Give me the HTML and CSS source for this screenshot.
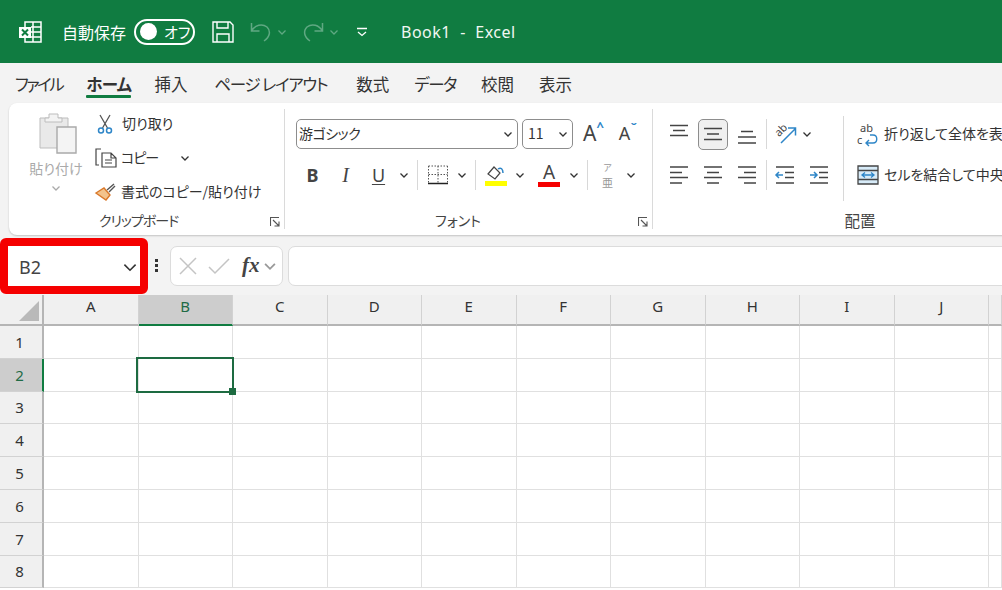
FILE: index.html
```html
<!DOCTYPE html>
<html lang="ja">
  <head>
    <meta charset="UTF-8" />
    <title>Book1 - Excel</title>
    <link rel="stylesheet" href="styles.css">
  </head>
  <body>
    <svg class="defs" aria-hidden="true">
      <symbol id="caret" viewBox="0 0 10 10"><path d="M1.5 3.5 5 7l3.5-3.5" fill="none" stroke="currentColor" stroke-width="1.3"/></symbol>
      <symbol id="launcher" viewBox="0 0 10 10"><path d="M.5 9V.5H9M3 3l5.5 5.5M4.5 9H9V4.500" fill="none" stroke="#555" stroke-width="1.100"/></symbol>
      <symbol id="al-top" viewBox="0 0 20 24"><path d="M1 3.500h18M4 8.500h12M1 13.500h18" stroke="#444" stroke-width="1.300"/></symbol>
      <symbol id="al-mid" viewBox="0 0 20 24"><path d="M1 6.500h18M4 12h12M1 17.500h18" stroke="#444" stroke-width="1.300"/></symbol>
      <symbol id="al-bot" viewBox="0 0 20 24"><path d="M4 9.500h12M1 15h18M1 21h18" stroke="#444" stroke-width="1.300"/></symbol>
      <symbol id="al-left" viewBox="0 0 20 20"><path d="M1 2h18M1 7.500h12M1 12.500h18M1 18h12" stroke="#444" stroke-width="1.300"/></symbol>
      <symbol id="al-center" viewBox="0 0 20 20"><path d="M1 2h18M4 7.500h12M1 12.500h18M4 18h12" stroke="#444" stroke-width="1.300"/></symbol>
      <symbol id="al-right" viewBox="0 0 20 20"><path d="M1 2h18M7 7.500h12M1 12.500h18M7 18h12" stroke="#444" stroke-width="1.300"/></symbol>
    </svg>

    <header class="titlebar">
      <svg class="xl-logo" width="23" height="22" viewBox="0 0 23 22">
        <path d="M6 1h16v20H6z" fill="none" stroke="#fff" stroke-width="1.500"/>
        <path d="M14 1v20M12 6h10M12 11h10M12 16h10" stroke="#fff" stroke-width="1.500"/>
        <rect x="0" y="6" width="12" height="11" fill="#fff"/>
        <path d="M3 8.500 9 14.500M9 8.500 3 14.500" stroke="#107c41" stroke-width="2"/>
      </svg>
      <span class="autosave">自動保存</span>
      <div class="toggle"><span class="knob"></span><span>オフ</span></div>
      <svg class="save" width="22" height="22" viewBox="0 0 22 22" fill="none" stroke="#fff" stroke-width="1.400">
        <path d="M1 1h17l3 3v17H1z"/>
        <path d="M5 1v6h11V1M5 21v-8h12v8"/>
      </svg>
      <svg class="undo" width="22" height="22" viewBox="0 0 22 22" fill="none" stroke="#5fa882" stroke-width="1.500">
        <path d="M1.500 2v8h8M1.500 10C5 4 12 2 17 6c4 4 3 10-3 14"/>
      </svg>
      <svg class="qat-caret" width="10" height="10"><use href="#caret"/></svg>
      <svg class="redo" width="22" height="22" viewBox="0 0 22 22" fill="none" stroke="#5fa882" stroke-width="1.500">
        <path d="M20.500 2v8h-8M20.500 10C17 4 10 2 5 6c-4 4-3 10 3 14"/>
      </svg>
      <svg class="qat-caret" width="10" height="10"><use href="#caret"/></svg>
      <svg class="qat-more" width="10" height="10" viewBox="0 0 10 10" fill="none" stroke="#fff" stroke-width="1.300">
        <path d="M0 1.500h10M1 5l4 3.500L9 5"/>
      </svg>
      <span class="doc-title">Book1&nbsp; - &nbsp;Excel</span>
    </header>

    <nav class="tabs">
      <span class="tab-file">ファイル</span>
      <span class="active">ホーム</span>
      <span class="tab-insert">挿入</span>
      <span class="tab-layout">ページ レイアウト</span>
      <span class="tab-formula">数式</span>
      <span class="tab-data">データ</span>
      <span>校閲</span>
      <span>表示</span>
    </nav>

    <section class="ribbon">
      <div class="group clipboard">
        <div class="group-body">
          <div class="paste">
            <svg width="38" height="41" viewBox="0 0 38 41">
              <path d="M1 5h28v30H1z" fill="#e9e9e9" stroke="#bdbdbd"/>
              <path d="M10 5V1h9v4h4v4H6V5z" fill="#f3f3f3" stroke="#bdbdbd"/>
              <path d="M18 14h19v26H18z" fill="#f4f4f4" stroke="#a9a9a9" stroke-width="1.400"/>
            </svg>
            <span>貼り付け</span>
            <svg class="caret-sm" width="10" height="10"><use href="#caret"/></svg>
          </div>
          <div class="clip-list">
            <div class="clip-item">
              <svg class="clip-icon" width="16" height="20" viewBox="0 0 16 20" fill="none">
                <path d="M3 1l7.500 13M13 1 5.500 14" stroke="#555" stroke-width="1.300"/>
                <circle cx="4" cy="16.500" r="2.500" stroke="#2e86c8" stroke-width="1.500"/>
                <circle cx="12" cy="16.500" r="2.500" stroke="#2e86c8" stroke-width="1.500"/>
              </svg>
              <span>切り取り</span>
            </div>
            <div class="clip-item">
              <svg class="clip-icon" width="22" height="20" viewBox="0 0 22 20" fill="none" stroke="#444" stroke-width="1.200">
                <path d="M6 1H1v16h3"/>
                <path d="M7 5h9l5 5v9H7zM16 5v5h5M10 12h7M10 15h7"/>
              </svg>
              <span class="copy-text">コピー</span>
              <svg class="copy-caret" width="10" height="10"><use href="#caret"/></svg>
            </div>
            <div class="clip-item">
              <svg class="clip-icon" width="22" height="20" viewBox="0 0 22 20" fill="none">
                <path d="M1 11 9 6l6 7-4 5z" fill="#f3c38c" stroke="#d9782a" stroke-width="1.400"/>
                <path d="M12 8l7-6M14 10l6-6" stroke="#555" stroke-width="1.400"/>
              </svg>
              <span>書式のコピー/貼り付け</span>
            </div>
          </div>
        </div>
        <div class="group-label">クリップボード<svg class="launcher" width="10" height="10"><use href="#launcher"/></svg></div>
      </div>

      <div class="group font-group">
        <div class="group-body rows">
          <div class="row">
            <div class="select font-name"><span>游ゴシック</span><svg width="10" height="10"><use href="#caret"/></svg></div>
            <div class="select font-size"><span>11</span><svg width="10" height="10"><use href="#caret"/></svg></div>
            <div class="grow-btn">A<b>^</b></div>
            <div class="shrink-btn">A<b>ˇ</b></div>
          </div>
          <div class="row">
            <div class="tool w33 bold">B</div>
            <div class="tool w33 italic">I</div>
            <div class="tool w33 under">U</div>
            <div class="caret"><svg width="10" height="10"><use href="#caret"/></svg></div>
            <div class="sep"></div>
            <div class="tool w30">
              <svg width="20" height="20" viewBox="0 0 20 20" fill="none" stroke="#555">
                <path d="M.5 1h19M.5 9.500h19M10 1v17M.5 1v17M19.500 1v17" stroke-dasharray="1.500 1.500"/>
                <path d="M0 18.500h20" stroke="#222" stroke-width="1.500"/>
              </svg>
            </div>
            <div class="caret"><svg width="10" height="10"><use href="#caret"/></svg></div>
            <div class="sep"></div>
            <div class="tool w30">
              <svg width="22" height="22" viewBox="0 0 22 22" fill="none">
                <path d="M3 10l6-7 6 6-5 6z" stroke="#444" stroke-width="1.200"/>
                <path d="M13 5c3-2 5 0 5 4" stroke="#2e86c8" stroke-width="1.500"/>
                <rect x="0" y="17" width="22" height="5" fill="#ffff00"/>
              </svg>
            </div>
            <div class="caret"><svg width="10" height="10"><use href="#caret"/></svg></div>
            <div class="tool w36 color-a">A<i></i></div>
            <div class="caret"><svg width="10" height="10"><use href="#caret"/></svg></div>
            <div class="sep"></div>
            <div class="tool w29 phonetic"><small>ア</small><span>亜</span></div>
            <div class="caret"><svg width="10" height="10"><use href="#caret"/></svg></div>
          </div>
        </div>
        <div class="group-label">フォント<svg class="launcher" width="10" height="10"><use href="#launcher"/></svg></div>
      </div>

      <div class="group align-group">
        <div class="group-body">
          <div class="rows align-rows">
            <div class="row">
              <div class="tool w34"><svg width="20" height="24"><use href="#al-top"/></svg></div>
              <div class="tool w34"><span class="pressed"><svg width="20" height="24"><use href="#al-mid"/></svg></span></div>
              <div class="tool w34"><svg width="20" height="24"><use href="#al-bot"/></svg></div>
              <div class="sep thin"></div>
              <div class="tool orient">
                <svg width="22" height="22" viewBox="0 0 22 22" fill="none">
                  <text x="0" y="11" transform="rotate(-45 6 8)" class="orient-text">ab</text>
                  <path d="M6 20 20 6M13 5h7.500v7.500" stroke="#2e86c8" stroke-width="1.500"/>
                </svg>
              </div>
              <div class="caret"><svg width="10" height="10"><use href="#caret"/></svg></div>
            </div>
            <div class="row">
              <div class="tool w34"><svg width="20" height="20"><use href="#al-left"/></svg></div>
              <div class="tool w34"><svg width="20" height="20"><use href="#al-center"/></svg></div>
              <div class="tool w34"><svg width="20" height="20"><use href="#al-right"/></svg></div>
              <div class="sep thin"></div>
              <div class="tool w34">
                <svg width="20" height="20" viewBox="0 0 20 20" fill="none">
                  <path d="M1 2h18M10 7.500h9M10 12.500h9M1 18h18" stroke="#444" stroke-width="1.300"/>
                  <path d="M8 10H1M4 7l-3 3 3 3" stroke="#2e86c8" stroke-width="1.500"/>
                </svg>
              </div>
              <div class="tool w34">
                <svg width="20" height="20" viewBox="0 0 20 20" fill="none">
                  <path d="M1 2h18M10 7.500h9M10 12.500h9M1 18h18" stroke="#444" stroke-width="1.300"/>
                  <path d="M1 10h7M5 7l3 3-3 3" stroke="#2e86c8" stroke-width="1.500"/>
                </svg>
              </div>
            </div>
          </div>
          <div class="sep tall"></div>
          <div class="rows wrap-rows">
            <div class="row">
              <svg class="wrap-icon" width="22" height="24" viewBox="0 0 22 24" fill="none">
                <text x="3" y="10" class="wrap-text">ab</text>
                <text x="0" y="22" class="wrap-text">c</text>
                <path d="M10 21h6c5 0 5-8 0-8h-3M12 18l-3 3 3 3" stroke="#2e86c8" stroke-width="1.400"/>
              </svg>
              <span>折り返して全体を表</span>
            </div>
            <div class="row">
              <svg class="wrap-icon" width="22" height="20" viewBox="0 0 22 20" fill="none">
                <path d="M1 1h20v18H1z" fill="#d7ebf8" stroke="#444" stroke-width="1.300"/>
                <path d="M1 5.500h20M1 14.500h20" stroke="#444" stroke-width="1.300"/>
                <path d="M5 10h12M8 7.500 5 10l3 2.500M14 7.500l3 2.500-3 2.500" stroke="#2e86c8" stroke-width="1.300"/>
              </svg>
              <span>セルを結合して中央</span>
            </div>
          </div>
        </div>
        <div class="group-label">配置</div>
      </div>
    </section>

    <section class="formula-row">
      <div class="name-box">B2<svg width="16" height="16" viewBox="0 0 10 10" fill="none" stroke="#333"><path d="M1.500 3.500 5 7l3.500-3.500"/></svg></div>
      <div class="dots"><i></i><i></i><i></i></div>
      <div class="fx-box">
        <svg width="18" height="18" viewBox="0 0 18 18" fill="none" stroke="#c4c4c4" stroke-width="1.500"><path d="M1 1l16 16M17 1 1 17"/></svg>
        <svg width="22" height="18" viewBox="0 0 22 18" fill="none" stroke="#c4c4c4" stroke-width="1.500"><path d="M1 10l6 6L21 2"/></svg>
        <span class="fx">fx</span>
        <svg class="fx-caret" width="14" height="14"><use href="#caret"/></svg>
      </div>
      <div class="formula-input"></div>
    </section>

    <section class="sheet">
      <div class="corner"><span class="corner-mark"></span></div>
      <div class="col-head">A</div><div class="col-head on">B</div><div class="col-head">C</div><div class="col-head">D</div><div class="col-head">E</div><div class="col-head">F</div><div class="col-head">G</div><div class="col-head">H</div><div class="col-head">I</div><div class="col-head">J</div><div class="col-head"></div>

      <div class="row-head">1</div><div></div><div></div><div></div><div></div><div></div><div></div><div></div><div></div><div></div><div></div><div></div>
      <div class="row-head on">2</div><div></div><div></div><div></div><div></div><div></div><div></div><div></div><div></div><div></div><div></div><div></div>
      <div class="row-head">3</div><div></div><div></div><div></div><div></div><div></div><div></div><div></div><div></div><div></div><div></div><div></div>
      <div class="row-head">4</div><div></div><div></div><div></div><div></div><div></div><div></div><div></div><div></div><div></div><div></div><div></div>
      <div class="row-head">5</div><div></div><div></div><div></div><div></div><div></div><div></div><div></div><div></div><div></div><div></div><div></div>
      <div class="row-head">6</div><div></div><div></div><div></div><div></div><div></div><div></div><div></div><div></div><div></div><div></div><div></div>
      <div class="row-head">7</div><div></div><div></div><div></div><div></div><div></div><div></div><div></div><div></div><div></div><div></div><div></div>
      <div class="row-head">8</div><div></div><div></div><div></div><div></div><div></div><div></div><div></div><div></div><div></div><div></div><div></div>

      <div class="cursor"><span class="handle"></span></div>
    </section>
  </body>
</html>
```

FILE: styles.css
```css
* {
  box-sizing: border-box;
}
body {
  margin: 0;
  width: 1002px;
  height: 590px;
  overflow: hidden;
  background: #f3f3f3;
  color: #333;
  font-family: "Noto Sans", "Noto Sans CJK JP", sans-serif;
  font-size: 14px;
  font-feature-settings: "palt";
}
svg {
  overflow: visible;
}
.defs {
  display: none;
}

/* title bar */
.titlebar {
  height: 63px;
  background: #107c41;
  color: #fff;
  display: flex;
  align-items: center;
  padding: 0 0 0 19px;
  font-size: 16px;
}
.autosave {
  margin-left: 20px;
  font-family: "Noto Sans CJK JP", sans-serif;
}
.toggle {
  margin-left: 8px;
  width: 61px;
  height: 26px;
  border: 2px solid #fff;
  border-radius: 13px;
  display: flex;
  align-items: center;
  gap: 7px;
  padding-left: 4px;
  font-size: 15px;
  font-family: "Noto Sans CJK JP", sans-serif;
}
.knob {
  width: 17px;
  height: 17px;
  border-radius: 50%;
  background: #fff;
}
.save {
  margin-left: 17px;
}
.undo {
  margin-left: 16px;
}
.qat-caret {
  margin-left: 5px;
  color: #5fa882;
}
.redo {
  margin-left: 15px;
}
.qat-more {
  margin-left: 18px;
}
.doc-title {
  margin-left: 34px;
  color: #f1f7f3;
  font-size: 16px;
  letter-spacing: 0.5px;
}

/* tabs */
.tabs {
  height: 40px;
  display: flex;
  align-items: center;
  gap: 25px;
  padding: 2px 0 0 15px;
  font-size: 16.500px;
  font-family: "Noto Sans CJK JP", sans-serif;
}
.tabs .active {
  font-weight: 700;
  letter-spacing: -0.6px;
  margin-left: -1px;
  position: relative;
}
.tabs .active::after {
  content: "";
  position: absolute;
  left: 0;
  right: 0;
  bottom: -2px;
  height: 3px;
  border-radius: 1px;
  background: #107c41;
}
.tab-file {
  letter-spacing: -2.500px;
}
.tab-insert {
  margin-left: -2px;
}
.tab-layout {
  letter-spacing: -1.300px;
  margin-left: 2px;
}
.tab-formula {
  margin-left: 4px;
}
.tab-data {
  letter-spacing: -1.500px;
}

/* ribbon */
.ribbon {
  margin-left: 9px;
  width: 1100px;
  height: 132px;
  background: #fff;
  border-radius: 8px;
  box-shadow: 0 1px 2px rgba(0, 0, 0, 0.2);
  display: flex;
  font-family: "Noto Sans CJK JP", sans-serif;
}
.group {
  flex: none;
  display: flex;
  flex-direction: column;
  position: relative;
  margin: 6px 0;
  border-right: 1px solid #dadada;
}
.group-body {
  flex: none;
  display: flex;
  height: 97px;
}
.group-label {
  flex: none;
  font-size: 14px;
  text-align: center;
  line-height: 20px;
  margin-top: 4px;
  color: #444;
}
.launcher {
  position: absolute;
  right: 4px;
  bottom: 2px;
}
.clipboard {
  width: 276px;
}
.clipboard .group-label {
  padding-right: 16px;
  letter-spacing: -1px;
}
.font-group {
  width: 368px;
  padding-left: 11px;
}
.font-group .group-label {
  padding-right: 32px;
}
.align-group {
  width: 455px;
  padding-left: 9px;
  border-right: none;
}
.align-group .group-label {
  width: 396px;
  font-size: 15.500px;
}

/* clipboard */
.paste {
  width: 56px;
  margin: 4px 0 0 19px;
  display: flex;
  flex-direction: column;
  align-items: center;
  color: #aaa;
  font-size: 14px;
}
.paste > svg:first-child {
  margin-left: 4px;
}
.paste span {
  margin-top: 4px;
  white-space: nowrap;
  line-height: 20px;
}
.caret-sm {
  margin-top: 5px;
  color: #aaa;
}
.clip-list {
  margin-left: 11px;
  margin-top: -2px;
}
.clip-item {
  height: 34px;
  display: flex;
  align-items: center;
  font-size: 14px;
  white-space: nowrap;
}
.clip-item span {
  padding-bottom: 2px;
}
.clip-icon {
  margin-right: 4px;
}
.clip-item:first-child .clip-icon {
  margin: 0 9px 0 2px;
}
.copy-text {
  letter-spacing: -1px;
}
.copy-caret {
  margin-left: 22px;
}

/* shared rows of small tools */
.rows {
  display: flex;
  flex-direction: column;
  gap: 11px;
  padding-top: 10px;
}
.row {
  height: 30px;
  display: flex;
  align-items: center;
}
.tool,
.caret {
  height: 30px;
  display: flex;
  align-items: center;
  justify-content: center;
  flex: none;
}
.caret {
  width: 18px;
}
.sep {
  flex: none;
  width: 10px;
  height: 30px;
  position: relative;
}
.sep::after {
  content: "";
  position: absolute;
  left: 4px;
  top: 0;
  bottom: 0;
  width: 1px;
  background: #d8d8d8;
}
.w29 { width: 29px; }
.w30 { width: 30px; }
.w33 { width: 33px; }
.w34 { width: 34px; }
.w36 { width: 36px; }

/* font group */
.select {
  height: 30px;
  border: 1px solid #8d8d8d;
  border-radius: 5px;
  display: flex;
  align-items: center;
  justify-content: space-between;
  padding: 0 4px 0 2px;
  font-size: 14px;
}
.select span {
  padding-bottom: 2px;
}
.font-name {
  width: 222px;
  letter-spacing: -0.5px;
}
.font-size {
  width: 51px;
  margin-left: 4px;
  padding-left: 5px;
}
.grow-btn,
.shrink-btn {
  display: flex;
  padding-bottom: 2px;
  font-family: "Noto Sans", sans-serif;
  color: #444;
}
.grow-btn {
  margin-left: 10px;
  font-size: 21px;
}
.shrink-btn {
  margin-left: 15px;
  font-size: 18px;
}
.grow-btn b,
.shrink-btn b {
  color: #2e86c8;
  font-size: 13px;
  line-height: 14px;
}
.bold,
.under {
  font-family: "Noto Sans", sans-serif;
  font-size: 18px;
  color: #444;
}
.bold {
  font-weight: 700;
}
.italic {
  font-style: italic;
  font-family: "Liberation Serif", serif;
  font-size: 20px;
  color: #444;
}
.under {
  text-decoration: underline;
  text-decoration-thickness: 1px;
  text-underline-offset: 2px;
}
.color-a {
  flex-direction: column;
  padding-left: 4px;
  font-family: "Noto Sans", sans-serif;
  font-size: 19px;
  line-height: 19px;
  color: #444;
}
.color-a i {
  width: 22px;
  height: 5px;
  background: #f50000;
}
.phonetic {
  flex-direction: column;
  color: #999;
  font-size: 11px;
  line-height: normal;
}
.phonetic small {
  font-size: 9px;
}

/* alignment group */
.align-rows {
  width: 181px;
}
.sep.thin {
  width: 4px;
}
.sep.thin::after {
  left: 2px;
}
.pressed {
  width: 30px;
  height: 31px;
  border: 1px solid #8d8d8d;
  border-radius: 5px;
  background: #f0f0f0;
  display: flex;
  align-items: center;
  justify-content: center;
}
.orient {
  width: 30px;
  padding-left: 6px;
}
.orient-text,
.wrap-text {
  font-size: 11px;
  fill: #444;
  font-family: "Noto Sans", sans-serif;
}
.sep.tall {
  width: 14px;
  height: 85px;
  margin-top: 7px;
}
.sep.tall::after {
  left: 0;
}
.wrap-rows {
  font-size: 14px;
  white-space: nowrap;
}
.wrap-rows span {
  padding-bottom: 2px;
}
.wrap-icon {
  margin-right: 5px;
}

/* formula bar */
.formula-row {
  height: 60px;
  display: flex;
  align-items: center;
  padding-top: 1px;
}
.name-box {
  width: 148px;
  height: 56px;
  margin-top: 1px;
  border: 8px solid #f50000;
  border-radius: 6px;
  background: #fff;
  display: flex;
  align-items: center;
  justify-content: space-between;
  padding: 2px 2px 0 11px;
  font-size: 18px;
  color: #444;
}
.dots {
  width: 16px;
  margin-right: 6px;
  display: flex;
  flex-direction: column;
  align-items: center;
  gap: 2px;
}
.dots i {
  width: 3px;
  height: 3px;
  background: #333;
}
.fx-box {
  width: 113px;
  height: 40px;
  background: #fff;
  border: 1px solid #dcdcdc;
  border-radius: 7px;
  display: flex;
  align-items: center;
  padding-left: 8px;
  gap: 11px;
}
.fx {
  font-family: "Liberation Serif", serif;
  font-style: italic;
  font-weight: 700;
  font-size: 21px;
  color: #444;
  margin-left: 1px;
}
.fx-caret {
  margin-left: -8px;
  color: #999;
}
.formula-input {
  flex: 1;
  height: 40px;
  margin-left: 5px;
  margin-right: -8px;
  background: #fff;
  border: 1px solid #dcdcdc;
  border-radius: 7px;
}

/* sheet */
.sheet {
  position: relative;
  height: 295px;
  background: #fff;
  display: grid;
  grid-template-columns: 44px repeat(10, 94.500px) 13px;
  grid-template-rows: 31px repeat(9, 32.800px);
  overflow: hidden;
}
.sheet > div {
  border-right: 1px solid #e0e0e0;
  border-bottom: 1px solid #e0e0e0;
}
.sheet > .corner {
  background: #f0f0f0;
  border-right: 2px solid #b5b5b5;
  border-bottom: 2px solid #b5b5b5;
  position: relative;
}
.corner-mark {
  position: absolute;
  right: 3px;
  bottom: 3px;
  width: 0;
  height: 0;
  border-left: 20px solid transparent;
  border-bottom: 20px solid #b9b9b9;
}
.sheet > .col-head {
  background: #f0f0f0;
  border-right: 1px solid #d2d2d2;
  border-bottom: 2px solid #b5b5b5;
  text-align: center;
  font-size: 15px;
  line-height: 22px;
  color: #333;
}
.sheet > .row-head {
  background: #f0f0f0;
  border-right: 2px solid #b5b5b5;
  border-bottom: 1px solid #d2d2d2;
  display: flex;
  align-items: center;
  justify-content: center;
  padding-right: 3px;
  font-size: 15px;
  color: #333;
}
.sheet > .col-head.on {
  background: #cdcdcd;
  color: #1f6b46;
  border-bottom-color: #107c41;
}
.sheet > .row-head.on {
  background: #cdcdcd;
  color: #1f6b46;
  border-right-color: #107c41;
}
.sheet > .cursor {
  position: absolute;
  left: 136px;
  top: 62px;
  width: 98px;
  height: 36px;
  border: 2px solid #1d6b41;
}
.handle {
  position: absolute;
  right: -4px;
  bottom: -4px;
  width: 7px;
  height: 7px;
  background: #1d6b41;
}
```
